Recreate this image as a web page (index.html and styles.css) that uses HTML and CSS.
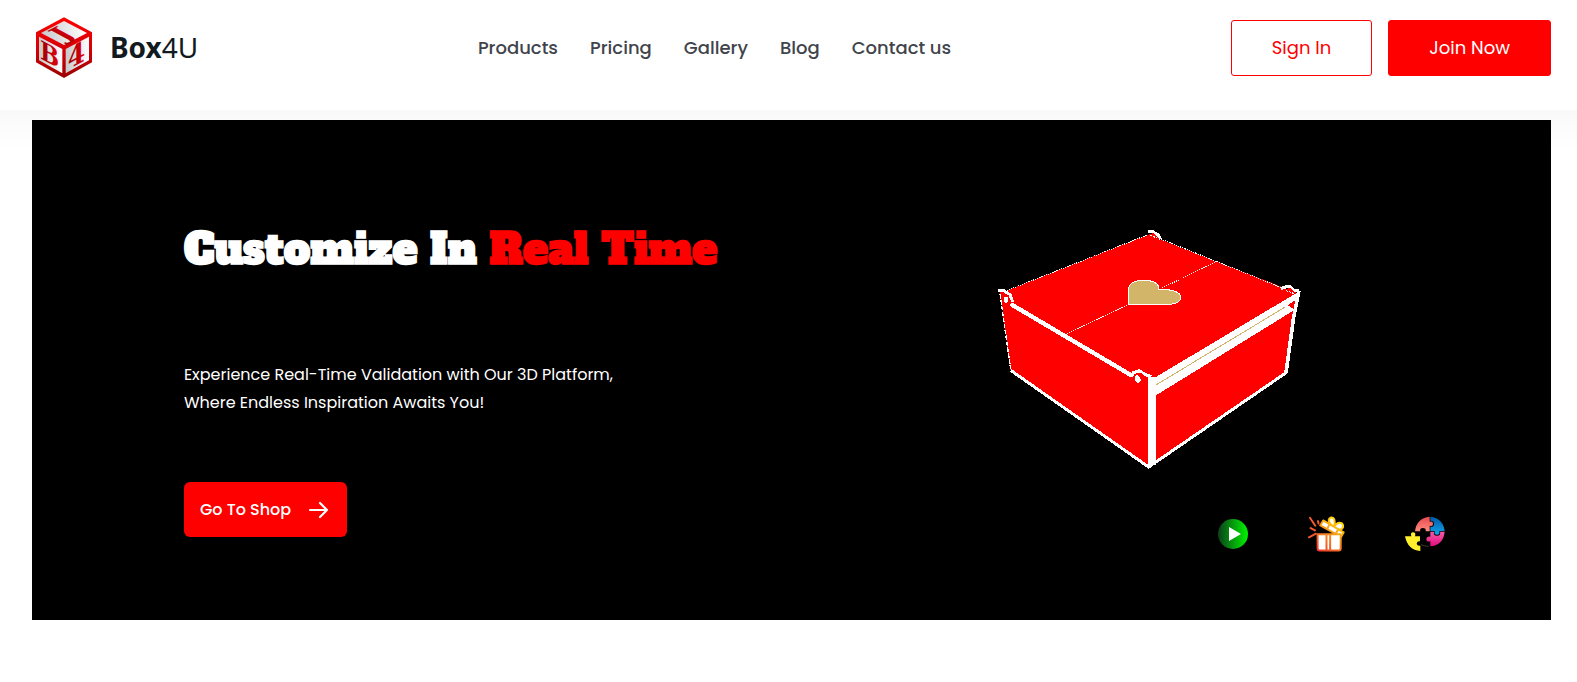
FILE: index.html
```html
<!DOCTYPE html>
<html lang="en">
<head>
<meta charset="utf-8">
<meta name="viewport" content="width=device-width, initial-scale=1">
<title>Box4U</title>
<link rel="stylesheet" href="styles.css">
</head>
<body>
<header class="header">
  <a class="brand" href="#">
    <svg class="brand-mark" viewBox="46 34 172 186" aria-hidden="true">
      <defs>
        <linearGradient id="edge" x1="0" y1="0" x2="0" y2="1"><stop offset="0" stop-color="#f00"/><stop offset=".5" stop-color="#d80008"/><stop offset="1" stop-color="#900"/></linearGradient>
        <linearGradient id="face" x1="0" y1="0" x2="1" y2="0"><stop offset="0" stop-color="#c8c8cc"/><stop offset="1" stop-color="#fff"/></linearGradient>
        <linearGradient id="ink" x1="0" y1="0" x2="1" y2="0"><stop offset="0" stop-color="#900"/><stop offset="1" stop-color="#e00010"/></linearGradient>
      </defs>
      <path d="M132 38L216 83V173L132 220L48 173V83Z" fill="url(#edge)"/>
      <path d="M132 49L201 85L132 121L63 85Z" fill="url(#face)"/>
      <path d="M57 96L127 133V206L57 167Z" fill="url(#face)"/>
      <path d="M207 96L137 133V206L207 167Z" fill="url(#face)"/>
      <g class="brand-letters" fill="url(#ink)">
        <text transform="matrix(.87 -.47 .87 .47 132 110)" font-size="84">J</text>
        <text transform="matrix(.87 .47 0 1 60 161)" font-size="78">B</text>
        <text transform="matrix(.87 -.47 0 1 143 195)" font-size="86">4</text>
      </g>
    </svg>
    <span class="brand-name"><b>Box</b>4U</span>
  </a>
  <nav class="nav">
    <a href="#">Products</a>
    <a href="#">Pricing</a>
    <a href="#">Gallery</a>
    <a href="#">Blog</a>
    <a href="#">Contact us</a>
  </nav>
  <div class="account">
    <button class="btn btn-outline" type="button">Sign In</button>
    <button class="btn btn-solid" type="button">Join Now</button>
  </div>
</header>
<main class="main">
  <section class="hero">
    <div class="copy">
      <h1 class="title">Customize In <span class="accent">Real Time</span></h1>
      <p class="lead">Experience Real-Time Validation with Our 3D Platform,<br>Where Endless Inspiration Awaits You!</p>
      <button class="shop" type="button">Go To Shop
        <svg class="arrow" viewBox="0 0 20 18" aria-hidden="true"><path d="M1 9H18M11 2L18 9L11 16" fill="none" stroke="#fff" stroke-width="2.2" stroke-linecap="round" stroke-linejoin="round"/></svg>
      </button>
    </div>
    <div class="visual">
      <svg class="box" viewBox="0 0 1020 780" shape-rendering="crispEdges" role="img" aria-label="Red gift box">
        <path d="M80 212L504 44L950 218L948 270L918 456L506 742L92 452L60 215Z" fill="#f00"/>
        <path d="M516 478L956 215L940 272L528 526H516Z" fill="#fff"/>
        <path d="M922 256L950 238L945 268Z" fill="#f00"/>
        <path d="M516 502L914 262" stroke="#d2b568" stroke-width="3" fill="none"/>
        <g fill="none" stroke="#fff">
          <path d="M80 212L504 44M542 57L905 203M260 341L444 254M538 208L712 124" stroke-width="3" stroke-dasharray="4 3"/>
          <path d="M60 222L92 448" stroke-width="4" stroke-dasharray="14 4"/>
          <path d="M92 252L454 466" stroke-width="13"/>
          <path d="M92 451L506 741L920 457" stroke-width="9"/>
          <path d="M516 472V736" stroke-width="24"/>
          <path d="M957 212L941 292L918 458" stroke-width="11"/>
          <path d="M54 210H68L90 224L98 246M454 470L460 458L478 452L496 464L514 470M503 34H516L534 44L541 58M903 206L916 201L930 200L940 210L958 212" stroke-width="9"/>
        </g>
        <path d="M506 42L520 40L536 56L520 58ZM914 208L930 204L948 222L922 216Z" fill="#f00"/>
        <path d="M460 484L462 466L482 458L498 470L492 492L476 494Z" fill="#f00"/>
        <path d="M64 224L78 222L92 240L88 256L74 252Z" fill="#f00"/>
        <ellipse cx="78" cy="240" rx="6" ry="10" fill="#fff"/>
        <ellipse cx="473" cy="477" rx="8" ry="12" fill="#fff" transform="rotate(-20 473 477)"/>
        <path d="M510 46L532 54M918 212L946 222" stroke="#fff" stroke-width="3" stroke-dasharray="6 4"/>
        <path d="M446 254V204C450 186 466 181 490 181C520 181 538 190 536 208C570 207 602 214 602 232C602 248 580 254 550 254Z" fill="#d2b568" stroke="#fff" stroke-width="3"/>
      </svg>
      <div class="tools">
        <button class="tool" type="button" aria-label="Play">
          <svg width="30" height="30" viewBox="0 0 30 30"><defs><linearGradient id="play"><stop offset="0" stop-color="#0b401b"/><stop offset="1" stop-color="#00f500"/></linearGradient></defs><circle cx="15" cy="15" r="15" fill="url(#play)"/><path d="M11 8L23 15L11 22Z" fill="#fff"/></svg>
        </button>
        <button class="tool" type="button" aria-label="Gift">
          <svg width="37" height="36" viewBox="0 0 112 108">
            <defs><linearGradient id="gift" gradientUnits="userSpaceOnUse" x1="30" y1="104" x2="100" y2="10"><stop offset="0" stop-color="#f0382c"/><stop offset=".5" stop-color="#f78a1d"/><stop offset="1" stop-color="#ffe600"/></linearGradient></defs>
            <g fill="#fff" stroke="url(#gift)" stroke-width="6" stroke-linejoin="round" stroke-linecap="round">
              <path d="M67 23Q57 9 70 4Q84 2 80 30Q90 16 103 22Q113 34 96 42L80 36Z"/>
              <path d="M46 13L108 49L100 63L37 28Z"/>
              <path d="M65 24L58 39M92 40L83 54" fill="none"/>
              <path d="M29 55H99V98Q99 104 93 104H35Q29 104 29 98Z"/>
              <path d="M56 56V103M67 56V103" fill="none"/>
              <path d="M6 5L22 29M8 36L21 43M3 64L24 53M30 15L32 22" fill="none" stroke="#f35b2c"/>
            </g>
          </svg>
        </button>
        <button class="tool" type="button" aria-label="Puzzle">
          <svg width="40" height="36" viewBox="0 0 120 108">
            <defs>
              <linearGradient id="coral" x2="0" y2="1"><stop offset="0" stop-color="#e9484c"/><stop offset="1" stop-color="#ff8a80"/></linearGradient>
              <linearGradient id="blue" x2="0" y2="1"><stop offset="0" stop-color="#0058a6"/><stop offset="1" stop-color="#10a5e8"/></linearGradient>
              <linearGradient id="pink" x2="0" y2="1"><stop offset="0" stop-color="#f45ca8"/><stop offset="1" stop-color="#e60b80"/></linearGradient>
            </defs>
            <path d="M30 46Q34 7 74 2V17Q84 14 84 23Q84 32 74 29V46H62Q64 36 53 36Q43 37 46 46Z" fill="url(#coral)"/>
            <path d="M76 2Q115 7 119 45H103Q106 56 96 56Q86 56 89 45H76V32Q87 34 87 23Q87 13 76 14Z" fill="url(#blue)"/>
            <path d="M76 47H87Q84 59 96 59Q108 59 105 47H119Q115 87 76 91V76Q64 79 64 69Q65 59 76 62Z" fill="url(#pink)"/>
            <path d="M0 61H19Q15 50 24 49Q34 50 30 61H45V76Q36 75 35 83Q36 90 46 89V105Q8 102 0 61Z" fill="#fff02d"/>
            <path d="M48 86Q57 91 71 91" fill="none" stroke="#555" stroke-width="2"/>
          </svg>
        </button>
      </div>
    </div>
  </section>
</main>
</body>
</html>
```
FILE: styles.css
```css
* { box-sizing: border-box; }

body {
  margin: 0;
  background: #fff;
  font-family: Poppins, Inter, sans-serif;
}

a { color: inherit; text-decoration: none; }

button { font: inherit; cursor: pointer; }

.header {
  display: flex;
  justify-content: space-between;
  align-items: flex-start;
  padding: 16px 26px 32px 34px;
}

.brand {
  display: flex;
  align-items: center;
  gap: 16px;
  color: #101a20;
}

.brand-mark { width: 60px; height: 62px; }

.brand-letters {
  font-family: "DejaVu Serif", serif;
  font-weight: 700;
}

.brand-name {
  font-family: "Noto Sans", sans-serif;
  font-size: 28px;
  line-height: 36px;
}

.nav {
  display: flex;
  gap: 32px;
  padding-top: 18px;
  color: #3f444b;
  font-size: 18px;
  font-weight: 500;
  line-height: 28px;
}

.account {
  display: flex;
  justify-content: flex-end;
  gap: 16px;
  padding-top: 4px;
}

.btn {
  height: 56px;
  padding: 0 40px 2px;
  border: 1px solid #f00;
  border-radius: 3px;
  font-size: 18px;
}

.btn-outline { background: #fff; color: #f00; }
.btn-solid { background: #f00; color: #fff; }

.main {
  padding: 10px 26px 62px 32px;
  background: linear-gradient(#f9f9f9, #fff 40px);
}

.hero {
  display: grid;
  grid-template-columns: 53fr 47fr;
  padding: 100px 7% 66px 10%;
  background: #000;
  color: #fff;
}

.copy {
  display: flex;
  flex-direction: column;
  align-items: flex-start;
}

.title {
  margin: 0;
  font-family: "Alfa Slab One", "DejaVu Serif", serif;
  font-size: 42px;
  font-weight: 700;
  line-height: 58px;
  white-space: nowrap;
}

.accent { color: #f00; }

.lead {
  margin: 83px 0 65px;
  font-size: 16px;
  line-height: 28px;
}

.shop {
  display: flex;
  align-items: center;
  gap: 18px;
  height: 55px;
  padding: 0 18px 0 16px;
  border: 0;
  border-radius: 6px;
  background: #f00;
  color: #fff;
  font-size: 16px;
  font-weight: 500;
}

.arrow { width: 20px; height: 18px; }

.visual {
  display: flex;
  flex-direction: column;
  align-items: center;
  gap: 36px;
  padding-left: 4px;
}

.box { width: 100%; max-width: 340px; }

.tools {
  display: flex;
  align-self: flex-end;
  align-items: center;
  gap: 60px;
  padding-bottom: 2px;
}

.tool {
  display: flex;
  padding: 0;
  border: 0;
  background: none;
}
```
